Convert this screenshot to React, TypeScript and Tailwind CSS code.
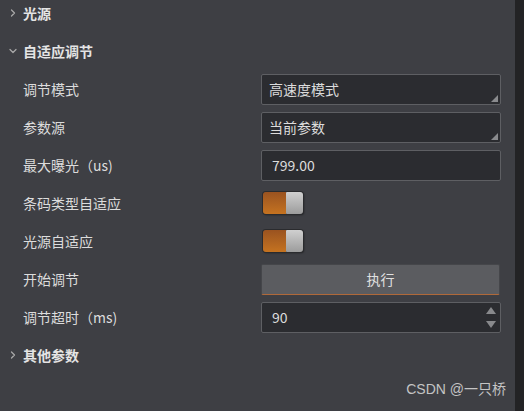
import { ChevronRight, ChevronDown } from "lucide-react"

const font = { fontFamily: '"Noto Sans CJK SC", "Noto Sans", sans-serif' }

function Section({ title, open }: { title: string; open?: boolean }) {
  return (
    <div className="flex items-center h-[38px] pl-[7px]">
      {open ? (
        <ChevronDown className="w-[12px] h-[12px] text-[#a8a8a8]" strokeWidth={2.5} />
      ) : (
        <ChevronRight className="w-[12px] h-[12px] text-[#a8a8a8]" strokeWidth={2.5} />
      )}
      <span className="ml-[4px] text-[14px] font-bold text-[#e4e4e4]">{title}</span>
    </div>
  )
}

function Row({ label, children }: { label: string; children: React.ReactNode }) {
  return (
    <div className="flex items-center h-[38px]">
      <div className="w-[261px] pl-[23px] text-[14px] text-[#dcdcdc]">{label}</div>
      <div className="w-[240px] flex items-center">{children}</div>
    </div>
  )
}

function Select({ value }: { value: string }) {
  return (
    <div className="relative w-full h-[31px] bg-[#2b2c30] border border-[#5e5f63] rounded-[2px] flex items-center pl-[7px] text-[14px] text-[#dcdcdc]">
      {value}
      <svg className="absolute right-[2px] bottom-[2px]" width="7" height="7" viewBox="0 0 7 7">
        <path d="M7 0 L7 7 L0 7 Z" fill="#8a8b8e" />
      </svg>
    </div>
  )
}

function Toggle() {
  return (
    <div className="flex ml-[2px] h-[22px] rounded-[3px] shadow-[0_0_0_1px_#2a2b2e,1px_1px_2px_rgba(0,0,0,0.5)] overflow-hidden">
      <div className="w-[23px] bg-gradient-to-b from-[#9a5320] to-[#c57320]" />
      <div className="w-[17px] bg-gradient-to-b from-[#d0d0d0] to-[#9c9c9c] rounded-[1px]" />
    </div>
  )
}

export default function App() {
  return (
    <div className="w-[524px] h-[411px] flex bg-[#232325] overflow-hidden" style={font}>
      <div className="relative w-[515px] h-full bg-[#3e3f44]">
        <div className="-mt-[6px]">
          <Section title="光源" />
          <Section title="自适应调节" open />
          <Row label="调节模式">
            <Select value="高速度模式" />
          </Row>
          <Row label="参数源">
            <Select value="当前参数" />
          </Row>
          <Row label="最大曝光（us)">
            <div className="w-full h-[31px] bg-[#2b2c30] border border-[#5e5f63] rounded-[2px] flex items-center pl-[10px] text-[14px] text-[#dcdcdc]">
              799.00
            </div>
          </Row>
          <Row label="条码类型自适应">
            <Toggle />
          </Row>
          <Row label="光源自适应">
            <Toggle />
          </Row>
          <Row label="开始调节">
            <button className="w-[239px] h-[31px] bg-[#5b5c60] border border-[#45464a] border-b-[#b0693a] rounded-[2px] text-[14px] text-[#e0e0e0]">
              执行
            </button>
          </Row>
          <Row label="调节超时（ms)">
            <div className="relative w-full h-[31px] bg-[#2b2c30] border border-[#5e5f63] rounded-[2px] flex items-center pl-[10px] text-[14px] text-[#dcdcdc]">
              90
              <svg className="absolute right-[4px] top-[4px]" width="10" height="7" viewBox="0 0 10 7">
                <path d="M5 0 L10 7 L0 7 Z" fill="#88898c" />
              </svg>
              <svg className="absolute right-[4px] bottom-[4px]" width="10" height="7" viewBox="0 0 10 7">
                <path d="M0 0 L10 0 L5 7 Z" fill="#88898c" />
              </svg>
            </div>
          </Row>
          <Section title="其他参数" />
        </div>
        <div className="absolute right-[9px] bottom-[11px] text-[14px] text-[#c4c4c4]" style={{ fontFamily: '"Liberation Sans", "Noto Sans CJK SC", sans-serif' }}>
          CSDN @一只桥
        </div>
      </div>
    </div>
  )
}
